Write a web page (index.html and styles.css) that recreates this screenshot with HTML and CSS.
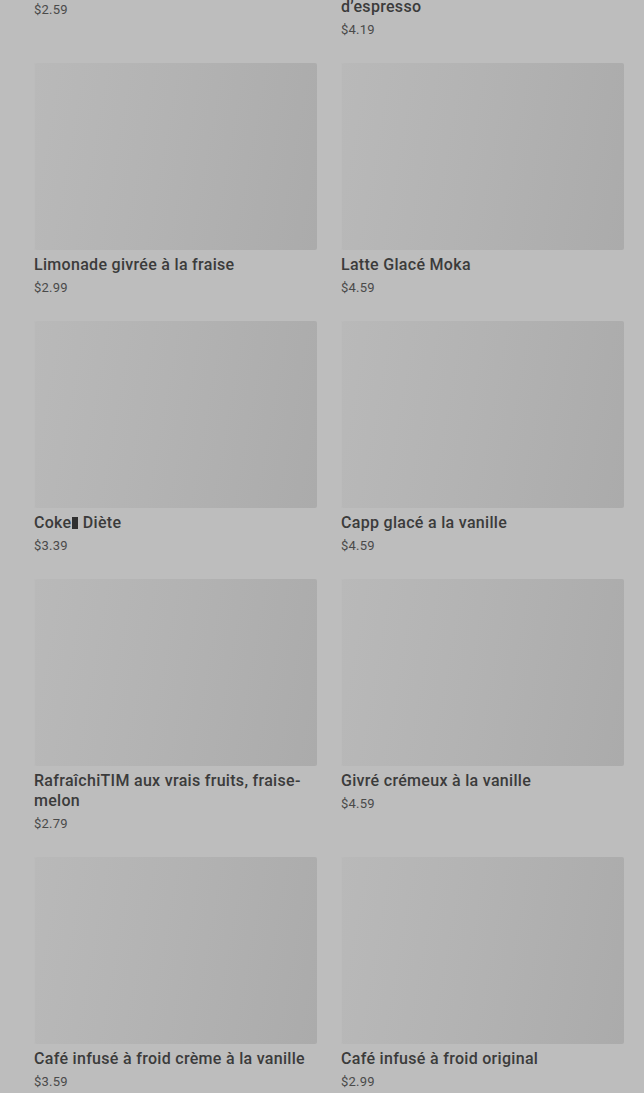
FILE: index.html
```html
<!DOCTYPE html>
<html lang="fr">
<head>
    <meta charset="UTF-8">
    <meta name="viewport" content="width=device-width, initial-scale=1.0">
    <title>Boissons froides</title>
    <link rel="stylesheet" href="styles.css">
</head>
<body>

    <div class="menu">
        <div class="item">
            <div class="photo"></div>
            <div class="name">Thé glacé citron</div>
            <div class="price">$2.59</div>
        </div>
        <div class="item">
            <div class="photo"></div>
            <div class="name">Boisson glacée crémeuse à base d’espresso</div>
            <div class="price">$4.19</div>
        </div>

        <div class="item">
            <div class="photo"></div>
            <div class="name">Limonade givrée à la fraise</div>
            <div class="price">$2.99</div>
        </div>
        <div class="item">
            <div class="photo"></div>
            <div class="name">Latte Glacé Moka</div>
            <div class="price">$4.59</div>
        </div>

        <div class="item">
            <div class="photo"></div>
            <div class="name">Coke<span class="tm"></span> Diète</div>
            <div class="price">$3.39</div>
        </div>
        <div class="item">
            <div class="photo"></div>
            <div class="name">Capp glacé a la vanille</div>
            <div class="price">$4.59</div>
        </div>

        <div class="item">
            <div class="photo"></div>
            <div class="name">RafraîchiTIM aux vrais fruits, fraise-melon</div>
            <div class="price">$2.79</div>
        </div>
        <div class="item">
            <div class="photo"></div>
            <div class="name">Givré crémeux à la vanille</div>
            <div class="price">$4.59</div>
        </div>

        <div class="item">
            <div class="photo"></div>
            <div class="name">Café infusé à froid crème à la vanille</div>
            <div class="price">$3.59</div>
        </div>
        <div class="item">
            <div class="photo"></div>
            <div class="name">Café infusé à froid original</div>
            <div class="price">$2.99</div>
        </div>
    </div>

</body>
</html>
```

FILE: styles.css
```css
body {
    font-family: Roboto, 'Liberation Sans', Arial, sans-serif;
    background-color: #bdbdbd;
    margin: 0;
    overflow: hidden;
}

/* list is shown scrolled, first row partly above the fold */
.menu {
    display: grid;
    grid-template-columns: repeat(2, 283px);
    column-gap: 24px;
    row-gap: 23px;
    align-items: start;
    padding: 0 20px 0 34px;
    margin-top: -215px;
}

.item {
    display: flex;
    flex-direction: column;
}

.photo {
    height: 187px;
    border-radius: 2px;
    background: linear-gradient(100deg, #b9b9b9 0%, #b3b3b3 45%, #ababab 100%);
    box-shadow: inset 1px 0 0 #bcbcbc;
}

.name {
    margin-top: 5px;
    font-size: 16px;
    line-height: 20px;
    font-weight: 500;
    letter-spacing: 0.3px;
    color: #3b3b3b;
}

.tm {
    display: inline-block;
    width: 6px;
    height: 12px;
    margin-left: 1px;
    background-color: #2f2f2f;
    vertical-align: -1px;
}

.price {
    margin-top: 3px;
    font-size: 13px;
    line-height: 20px;
    letter-spacing: 0.2px;
    color: #4a4a4a;
}
```
